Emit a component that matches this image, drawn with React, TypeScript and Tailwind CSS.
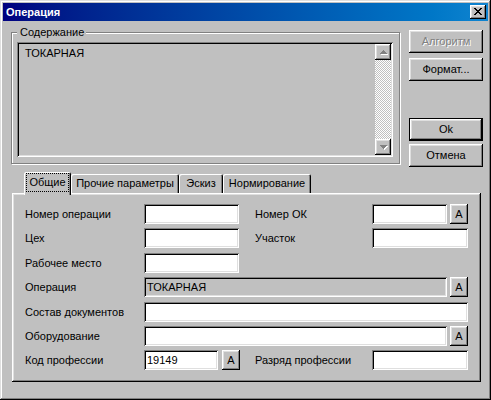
import React from "react";

const raised =
  "shadow-[inset_-1px_-1px_#000,inset_1px_1px_#fff,inset_-2px_-2px_#808080,inset_2px_2px_#dfdfdf]";
const sunken =
  "shadow-[inset_1px_1px_#808080,inset_-1px_-1px_#fff,inset_2px_2px_#000,inset_-2px_-2px_#dfdfdf]";

function Field({ w, value, disabled }: { w: string; value?: string; disabled?: boolean }) {
  return (
    <div
      className={`${sunken} ${w} h-[20px] shrink-0 flex items-center pl-[3px] ${
        disabled ? "bg-[#c0c0c0]" : "bg-white"
      }`}
    >
      {value}
    </div>
  );
}

function ABtn({ ml }: { ml: string }) {
  return (
    <div className={`${raised} ${ml} w-[18px] h-[20px] shrink-0 flex items-center justify-center`}>
      A
    </div>
  );
}

function Label({ children, w }: { children: React.ReactNode; w: string }) {
  return <div className={`${w} shrink-0 whitespace-nowrap`}>{children}</div>;
}

function Btn({
  children,
  disabled,
  def,
  mt,
}: {
  children: React.ReactNode;
  disabled?: boolean;
  def?: boolean;
  mt: string;
}) {
  if (def) {
    return (
      <div className={`${mt} w-[74px] h-[23px] border border-black`}>
        <div className={`${raised} w-full h-full flex items-center justify-center`}>{children}</div>
      </div>
    );
  }
  return (
    <div
      className={`${raised} ${mt} w-[74px] h-[23px] flex items-center justify-center ${
        disabled ? "text-[#808080] [text-shadow:1px_1px_#fff]" : ""
      }`}
    >
      {children}
    </div>
  );
}

function Arrow({ up }: { up?: boolean }) {
  return (
    <svg width="9" height="6" viewBox="0 0 9 6" shapeRendering="crispEdges">
      {up ? (
        <>
          <path d="M4 1h1v1h1v1h1v1h1v1H1V4h1V3h1V2h1z" fill="#fff" transform="translate(1,1)" />
          <path d="M4 1h1v1h1v1h1v1h1v1H1V4h1V3h1V2h1z" fill="#808080" />
        </>
      ) : (
        <>
          <path d="M1 1h7v1H7v1H6v1H5v1H4V4H3V3H2V2H1z" fill="#fff" transform="translate(1,1)" />
          <path d="M1 1h7v1H7v1H6v1H5v1H4V4H3V3H2V2H1z" fill="#808080" />
        </>
      )}
    </svg>
  );
}

function Tab({ children, w, selected }: { children: React.ReactNode; w: string; selected?: boolean }) {
  if (selected) {
    return (
      <div
        className={`${w} h-[23px] -mb-[2px] relative z-10 bg-[#c0c0c0] shadow-[inset_1px_1px_#fff,inset_-1px_0_#000,inset_-2px_0_#808080] rounded-t-[2px] px-[2px] pt-[1px] pb-[3px] flex`}
      >
        <div className="flex-1 border border-dotted border-black flex items-center justify-center">
          {children}
        </div>
      </div>
    );
  }
  return (
    <div
      className={`${w} h-[19px] bg-[#c0c0c0] shadow-[inset_1px_1px_#fff,inset_-1px_0_#000,inset_-2px_0_#808080] rounded-t-[2px] flex items-center justify-center`}
    >
      {children}
    </div>
  );
}

export default function App() {
  return (
    <div className="w-[491px] h-[400px] bg-[#c0c0c0] p-[3px] flex flex-col text-black text-[11px] leading-[13px] font-['Liberation_Sans',Arial,sans-serif] shadow-[inset_-1px_-1px_#000,inset_1px_1px_#dfdfdf,inset_-2px_-2px_#808080,inset_2px_2px_#fff]">
      {/* Title bar */}
      <div className="h-[18px] shrink-0 bg-gradient-to-r from-[#000080] to-[#1084d0] flex items-center justify-between pl-[3px] pr-[2px]">
        <span className="text-white font-bold text-[11px]">Операция</span>
        <div className={`${raised} w-[16px] h-[14px] bg-[#c0c0c0] flex items-center justify-center pr-[1px] pb-[1px]`}>
          <svg width="8" height="7" viewBox="0 0 8 7" shapeRendering="crispEdges">
            <path
              d="M0 0h2v1h-2zM6 0h2v1h-2zM1 1h2v1h-2zM5 1h2v1h-2zM2 2h4v1h-4zM3 3h2v1h-2zM2 4h4v1h-4zM1 5h2v1h-2zM5 5h2v1h-2zM0 6h2v1h-2zM6 6h2v1h-2z"
              fill="#000"
            />
          </svg>
        </div>
      </div>

      {/* Top section */}
      <div className="flex items-start">
        <div className="relative ml-[8px] mt-[11px] w-[389px] h-[132px] border border-[#808080] shadow-[inset_1px_1px_#fff,1px_1px_#fff]">
          <div className="absolute left-[5px] -top-[7px] bg-[#c0c0c0] pl-[3px] pr-[2px]">Содержание</div>
          <div className={`${sunken} ml-[5px] mt-[9px] w-[376px] h-[115px] p-[2px] flex`}>
            <div className="flex-1 pl-[6px] pt-[3px]">ТОКАРНАЯ</div>
            <div className="w-[16px] flex flex-col">
              <div className={`${raised} h-[16px] bg-[#c0c0c0] flex items-center justify-center`}>
                <Arrow up />
              </div>
              <div className="flex-1 bg-[repeating-conic-gradient(#c0c0c0_0%_25%,#fff_0%_50%)] bg-[length:2px_2px]" />
              <div className={`${raised} h-[16px] bg-[#c0c0c0] flex items-center justify-center`}>
                <Arrow />
              </div>
            </div>
          </div>
        </div>
        <div className="ml-[9px] flex flex-col">
          <Btn mt="mt-[9px]" disabled>
            Алгоритм
          </Btn>
          <Btn mt="mt-[5px]">Формат...</Btn>
          <Btn mt="mt-[37px]" def>
            Ok
          </Btn>
          <Btn mt="mt-[3px]">Отмена</Btn>
        </div>
      </div>

      {/* Tabs */}
      <div className="ml-[9px] mt-[5px] flex flex-col">
        <div className="flex items-end pl-[12px]">
          <Tab w="w-[47px]" selected>
            Общие
          </Tab>
          <Tab w="w-[108px]">Прочие параметры</Tab>
          <Tab w="w-[44px]">Эскиз</Tab>
          <Tab w="w-[88px]">Нормирование</Tab>
        </div>
        <div className="w-[469px] h-[189px] shadow-[inset_-1px_-1px_#000,inset_1px_1px_#fff,inset_-2px_-2px_#808080,inset_2px_2px_#dfdfdf] pl-[13px] pt-[11px] flex flex-col">
          <div className="flex items-center h-[20px]">
            <Label w="w-[119px]">Номер операции</Label>
            <Field w="w-[95px]" />
            <Label w="w-[117px] ml-[16px]">Номер ОК</Label>
            <Field w="w-[75px]" />
            <ABtn ml="ml-[3px]" />
          </div>
          <div className="flex items-center h-[20px] mt-[4px]">
            <Label w="w-[119px]">Цех</Label>
            <Field w="w-[95px]" />
            <Label w="w-[117px] ml-[16px]">Участок</Label>
            <Field w="w-[96px]" />
          </div>
          <div className="flex items-center h-[20px] mt-[5px]">
            <Label w="w-[119px]">Рабочее место</Label>
            <Field w="w-[95px]" />
          </div>
          <div className="flex items-center h-[20px] mt-[4px]">
            <Label w="w-[119px]">Операция</Label>
            <Field w="w-[303px]" value="ТОКАРНАЯ" disabled />
            <ABtn ml="ml-[3px]" />
          </div>
          <div className="flex items-center h-[20px] mt-[5px]">
            <Label w="w-[119px]">Состав документов</Label>
            <Field w="w-[324px]" />
          </div>
          <div className="flex items-center h-[20px] mt-[4px]">
            <Label w="w-[119px]">Оборудование</Label>
            <Field w="w-[303px]" />
            <ABtn ml="ml-[3px]" />
          </div>
          <div className="flex items-center h-[20px] mt-[4px]">
            <Label w="w-[119px]">Код профессии</Label>
            <Field w="w-[74px]" value="19149" />
            <ABtn ml="ml-[4px]" />
            <Label w="w-[117px] ml-[15px]">Разряд профессии</Label>
            <Field w="w-[96px]" />
          </div>
        </div>
      </div>
    </div>
  );
}
